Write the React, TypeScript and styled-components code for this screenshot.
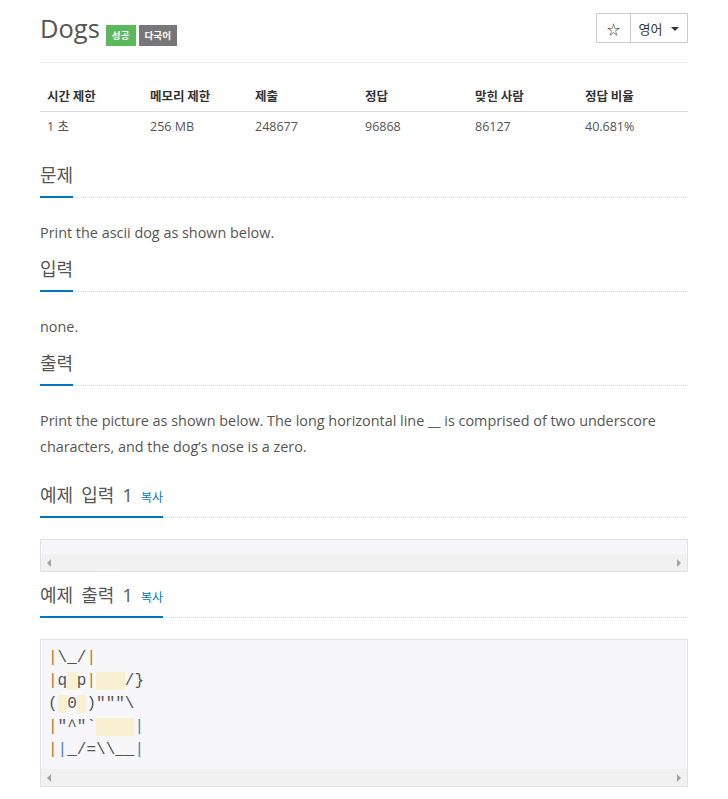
import React from "react";
import styled, { createGlobalStyle } from "styled-components";

const Global = createGlobalStyle`
  html, body { margin: 0; padding: 0; background: #fff; }
  body { font-family: "Open Sans", "Noto Sans CJK KR", sans-serif; color: #555; }
`;

const Page = styled.div`
  padding: 0 40px;
  width: 648px;
`;

const Header = styled.div`
  display: flex;
  align-items: flex-start;
  justify-content: space-between;
  padding-top: 13px;
  padding-bottom: 19px;
  border-bottom: 1px solid #eee;
`;

const TitleRow = styled.div`
  display: flex;
  align-items: baseline;
  gap: 3px;
  height: 30px;
`;

const Title = styled.h1`
  margin: 0 3px 0 0;
  font-size: 25.5px;
  line-height: 30px;
  font-weight: 400;
  color: #555;
`;

const Label = styled.span<{ $tone: "success" | "default" }>`
  display: inline-block;
  font-family: "Noto Sans CJK KR", sans-serif;
  font-size: 9.6px;
  font-weight: 700;
  line-height: 21px;
  height: 21px;
  padding: 0 6px;
  color: #fff;
  background: ${(p) => (p.$tone === "success" ? "#5cb85c" : "#777")};
  position: relative;
  top: 1px;
`;

const BtnGroup = styled.div`
  display: flex;
`;

const Btn = styled.button<{ $w: number }>`
  width: ${(p) => p.$w}px;
  height: 30px;
  border: 1px solid #ccc;
  background: #fff;
  color: #333;
  font-family: "Open Sans", "Noto Sans CJK KR", sans-serif;
  font-size: 13px;
  display: flex;
  align-items: center;
  justify-content: center;
  gap: 9px;
  padding: 0;
  & + & { margin-left: -1px; }
`;

const Caret = styled.span`
  display: inline-block;
  width: 0;
  height: 0;
  border-top: 4px solid #333;
  border-left: 4px solid transparent;
  border-right: 4px solid transparent;
  margin-top: 2px;
`;

const Table = styled.table`
  margin-top: 17px;
  width: 648px;
  border-collapse: collapse;
  table-layout: fixed;
  font-size: 13px;
  color: #333;
`;

const Col = styled.col<{ $w: number }>`
  width: ${(p) => p.$w}px;
`;

const Th = styled.th`
  text-align: left;
  font-family: "Noto Sans CJK KR", sans-serif;
  font-weight: 700;
  font-size: 12.5px;
  line-height: 18px;
  padding: 7px 7px 6px 7px;
  border-bottom: 1px solid #ddd;
`;

const Td = styled.td`
  text-align: left;
  line-height: 18px;
  padding: 6px 7px 5px;
  font-size: 12.5px;
  color: #555;
`;

const Section = styled.section`
  margin-top: 21px;
`;

const Headline = styled.div<{ $gap?: number }>`
  border-bottom: 1px dotted #ddd;
  margin-bottom: ${(p) => p.$gap ?? 22}px;
`;

const H2 = styled.h2`
  display: inline-block;
  margin: 0 0 -1px 0;
  font-size: 18px;
  line-height: 27px;
  height: 27px;
  font-weight: 400;
  padding-bottom: 7px;
  border-bottom: 2px solid #0076c0;
  color: #555;
  word-spacing: 3.5px;
  font-family: "Open Sans", "Noto Sans CJK KR", sans-serif;
`;

const CopyLink = styled.a`
  font-size: 12px;
  line-height: 1;
  color: #0076c0;
  text-decoration: none;
  word-spacing: 0;
`;

const Para = styled.p`
  margin: 0 0 10px 0;
  font-size: 14.4px;
  line-height: 26px;
  color: #555;
`;

const Samples = styled.div`
  margin-top: 22px;
  display: flex;
  flex-direction: column;
  gap: 10px;
`;

const Pre = styled.div`
  background: #f7f7f9;
  border: 1px solid #e1e1e8;
`;

const Code = styled.pre`
  margin: 0;
  padding: 7px;
  font-family: "Liberation Mono", monospace;
  font-size: 16px;
  line-height: 23px;
  color: #555;
  white-space: pre;
`;

const ScrollBar = styled.div`
  height: 17px;
  background: #f1f1f1;
  display: flex;
  align-items: center;
  justify-content: space-between;
  padding: 0 6px;
`;

const Arrow = styled.span<{ $dir: "left" | "right" }>`
  width: 0;
  height: 0;
  border-top: 4px solid transparent;
  border-bottom: 4px solid transparent;
  ${(p) =>
    p.$dir === "left"
      ? "border-right: 4px solid #a3a3a3;"
      : "border-left: 4px solid #a3a3a3;"}
`;

const Pipe = styled.span<{ $tone: "a" | "b" }>`
  color: ${(p) => (p.$tone === "a" ? "#b8772f" : "#4a7fc1")};
`;

const Ws = styled.span`
  background: #f8f0d0;
`;

const cols = [103, 105, 110, 110, 110, 110];
const heads = ["시간 제한", "메모리 제한", "제출", "정답", "맞힌 사람", "정답 비율"];
const vals = ["1 초", "256 MB", "248677", "96868", "86127", "40.681%"];

function Block({ children }: { children?: React.ReactNode }) {
  return (
    <Pre>
      <Code>{children}</Code>
      <ScrollBar>
        <Arrow $dir="left" />
        <Arrow $dir="right" />
      </ScrollBar>
    </Pre>
  );
}

export default function App() {
  return (
    <Page>
      <Global />
      <Header>
        <TitleRow>
          <Title>Dogs</Title>
          <Label $tone="success">성공</Label>
          <Label $tone="default">다국어</Label>
        </TitleRow>
        <BtnGroup>
          <Btn $w={35}>☆</Btn>
          <Btn $w={58}>
            영어 <Caret />
          </Btn>
        </BtnGroup>
      </Header>

      <Table>
        <colgroup>
          {cols.map((w, i) => (
            <Col key={i} $w={w} />
          ))}
        </colgroup>
        <thead>
          <tr>
            {heads.map((h) => (
              <Th key={h}>{h}</Th>
            ))}
          </tr>
        </thead>
        <tbody>
          <tr>
            {vals.map((v) => (
              <Td key={v}>{v}</Td>
            ))}
          </tr>
        </tbody>
      </Table>

      <Section>
        <Headline>
          <H2>문제</H2>
        </Headline>
        <Para>Print the ascii dog as shown below.</Para>
        <Headline>
          <H2>입력</H2>
        </Headline>
        <Para>none.</Para>
        <Headline>
          <H2>출력</H2>
        </Headline>
        <Para>
          Print the picture as shown below. The long horizontal line __ is comprised of two underscore
          characters, and the dog’s nose is a zero.
        </Para>
      </Section>

      <Samples>
        <div>
          <Headline $gap={21}>
            <H2>
              예제 입력 1 <CopyLink href="#">복사</CopyLink>
            </H2>
          </Headline>
          <Block />
        </div>
        <div>
          <Headline $gap={21}>
            <H2>
              예제 출력 1 <CopyLink href="#">복사</CopyLink>
            </H2>
          </Headline>
          <Block>
            <Pipe $tone="a">|</Pipe>\_/<Pipe $tone="a">|</Pipe>
            {"\n"}
            <Pipe $tone="a">|</Pipe>q<Ws> </Ws>p<Pipe $tone="a">|</Pipe>
            <Ws>{"   "}</Ws>/{"}"}
            {"\n"}(<Ws> </Ws>0<Ws> </Ws>){'"""'}\
            {"\n"}
            <Pipe $tone="a">|</Pipe>
            {'"^"`'}
            <Ws>{"    "}</Ws>
            <Pipe $tone="b">|</Pipe>
            {"\n"}
            <Pipe $tone="a">|</Pipe>
            <Pipe $tone="b">|</Pipe>_/=\\__<Pipe $tone="b">|</Pipe>
          </Block>
        </div>
      </Samples>
    </Page>
  );
}
